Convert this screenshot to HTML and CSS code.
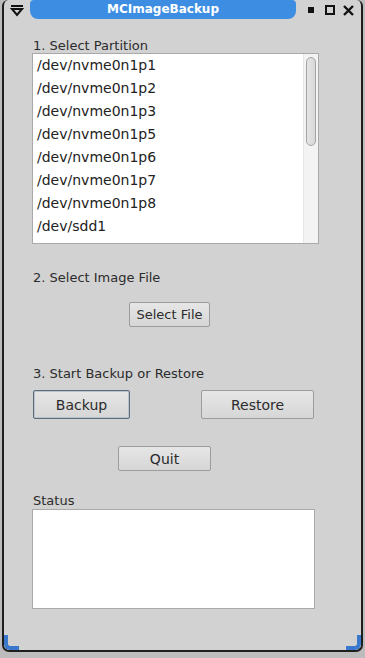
FILE: index.html
```html
<!DOCTYPE html>
<html lang="en">
  <head>
    <meta charset="UTF-8" />
    <meta name="viewport" content="width=device-width, initial-scale=1.0" />
    <title>MCImageBackup</title>
    <link rel="stylesheet" href="styles.css">
  </head>
  <body>
    <div class="window">
      <div class="titlebar">
        <svg class="menu-icon" width="14" height="12" viewBox="0 0 14 12">
          <rect x="1" y="0" width="12" height="2" fill="#111" />
          <polygon points="2,4 12,4 7,10" fill="none" stroke="#111" stroke-width="2" stroke-linejoin="miter" />
        </svg>
        <div class="title">MCImageBackup</div>
        <div class="controls">
          <svg class="btn-min" width="6" height="6" viewBox="0 0 6 6">
            <rect x="0" y="0" width="6" height="6" fill="#111" />
          </svg>
          <svg class="btn-max" width="10" height="10" viewBox="0 0 10 10">
            <rect x="1" y="1" width="8" height="8" fill="none" stroke="#111" stroke-width="2" />
          </svg>
          <svg class="btn-close" width="11" height="11" viewBox="0 0 11 11">
            <path d="M1 1 L10 10 M10 1 L1 10" stroke="#111" stroke-width="2.4" />
          </svg>
        </div>
      </div>

      <div class="content">
        <div class="label">1. Select Partition</div>
        <div class="listbox">
          <ul class="items">
            <li>/dev/nvme0n1p1</li>
            <li>/dev/nvme0n1p2</li>
            <li>/dev/nvme0n1p3</li>
            <li>/dev/nvme0n1p5</li>
            <li>/dev/nvme0n1p6</li>
            <li>/dev/nvme0n1p7</li>
            <li>/dev/nvme0n1p8</li>
            <li>/dev/sdd1</li>
            <li>/dev/sdd2</li>
          </ul>
          <div class="scrollbar">
            <div class="thumb"></div>
          </div>
        </div>

        <div class="label label-file">2. Select Image File</div>
        <button class="btn btn-select">Select File</button>

        <div class="label label-start">3. Start Backup or Restore</div>
        <div class="action-row">
          <button class="btn btn-backup">Backup</button>
          <button class="btn btn-restore">Restore</button>
        </div>

        <button class="btn btn-quit">Quit</button>

        <div class="label label-status">Status</div>
        <div class="status-box"></div>
      </div>

      <span class="corner corner-left"></span>
      <span class="corner corner-right"></span>
    </div>
  </body>
</html>
```

FILE: styles.css
```css
* {
  margin: 0;
  padding: 0;
  box-sizing: border-box;
}

body {
  background: #bcbcbc;
  font-family: "DejaVu Sans", "Liberation Sans", sans-serif;
  color: #2b2b2b;
  width: 365px;
  height: 658px;
  overflow: hidden;
}

.window {
  position: relative;
  margin-left: 2px;
  width: 361px;
  height: 652px;
  background: #d2d2d2;
  border: 2px solid #1e1e1e;
  border-top: none;
  border-radius: 6px 6px 7px 7px;
  overflow: hidden;
}

/* title bar */
.titlebar {
  display: flex;
  align-items: center;
  height: 20px;
}

.menu-icon {
  margin-left: 6px;
  margin-top: 1px;
}

.title {
  margin-left: 6px;
  width: 266px;
  height: 19px;
  align-self: flex-start;
  background: #3d8ee3;
  border-radius: 4px 4px 8px 8px;
  color: #fff;
  font-weight: bold;
  font-size: 12px;
  line-height: 19px;
  text-align: center;
}

.controls {
  display: flex;
  align-items: center;
  margin-left: 12px;
}

.btn-min {
  margin-right: 11px;
}

.btn-max {
  margin-right: 8px;
}

/* content */
.content {
  display: flex;
  flex-direction: column;
  align-items: flex-start;
  padding-left: 28px;
}

.label {
  font-size: 13px;
  line-height: 15px;
  padding-left: 1px;
  margin-top: 18px;
}

.label-file {
  margin-top: 26px;
}

.label-start {
  margin-top: 39px;
}

.label-status {
  margin-top: 22px;
}

.listbox {
  display: flex;
  width: 287px;
  height: 191px;
  background: #fff;
  border: 1px solid #a9a9a9;
  overflow: hidden;
}

.items {
  list-style: none;
  flex: 1;
  padding-left: 4px;
}

.items li {
  height: 23px;
  line-height: 23px;
  font-size: 14px;
  color: #222;
}

.scrollbar {
  width: 15px;
  background: #f3f3f3;
  border-left: 1px solid #e6e6e6;
  padding: 3px 2px 0 2px;
}

.thumb {
  height: 89px;
  border: 1px solid #a4a4a4;
  border-radius: 5px;
  background: linear-gradient(to right, #e4e4e4, #d8d8d8);
}

.btn {
  font-family: "DejaVu Sans", "Liberation Sans", sans-serif;
  font-size: 13px;
  color: #2b2b2b;
  background: linear-gradient(#e6e6e6, #d6d6d6);
  border: 1px solid #9c9c9c;
  border-radius: 2px;
}

.btn-select {
  margin-top: 17px;
  margin-left: 97px;
  width: 81px;
  height: 25px;
}

.action-row {
  display: flex;
  margin-top: 9px;
  padding-left: 1px;
  gap: 71px;
}

.btn-backup {
  width: 97px;
  height: 29px;
  font-size: 14px;
  border: 1px solid #5d6c7b;
  box-shadow: inset 0 0 0 1px #b9c3cc;
}

.btn-restore {
  width: 113px;
  height: 29px;
  font-size: 14px;
}

.btn-quit {
  margin-top: 27px;
  margin-left: 86px;
  width: 93px;
  height: 25px;
  font-size: 14px;
}

.status-box {
  margin-top: 1px;
  width: 283px;
  height: 100px;
  background: #fff;
  border: 1px solid #a9a9a9;
}

/* blue resize corners */
.corner {
  position: absolute;
  bottom: 0;
  width: 15px;
  height: 15px;
  border-bottom: 4px solid #3978cc;
}

.corner-left {
  left: 0;
  border-left: 4px solid #3978cc;
  border-bottom-left-radius: 6px;
}

.corner-right {
  right: 0;
  border-right: 4px solid #3978cc;
  border-bottom-right-radius: 6px;
}
```
